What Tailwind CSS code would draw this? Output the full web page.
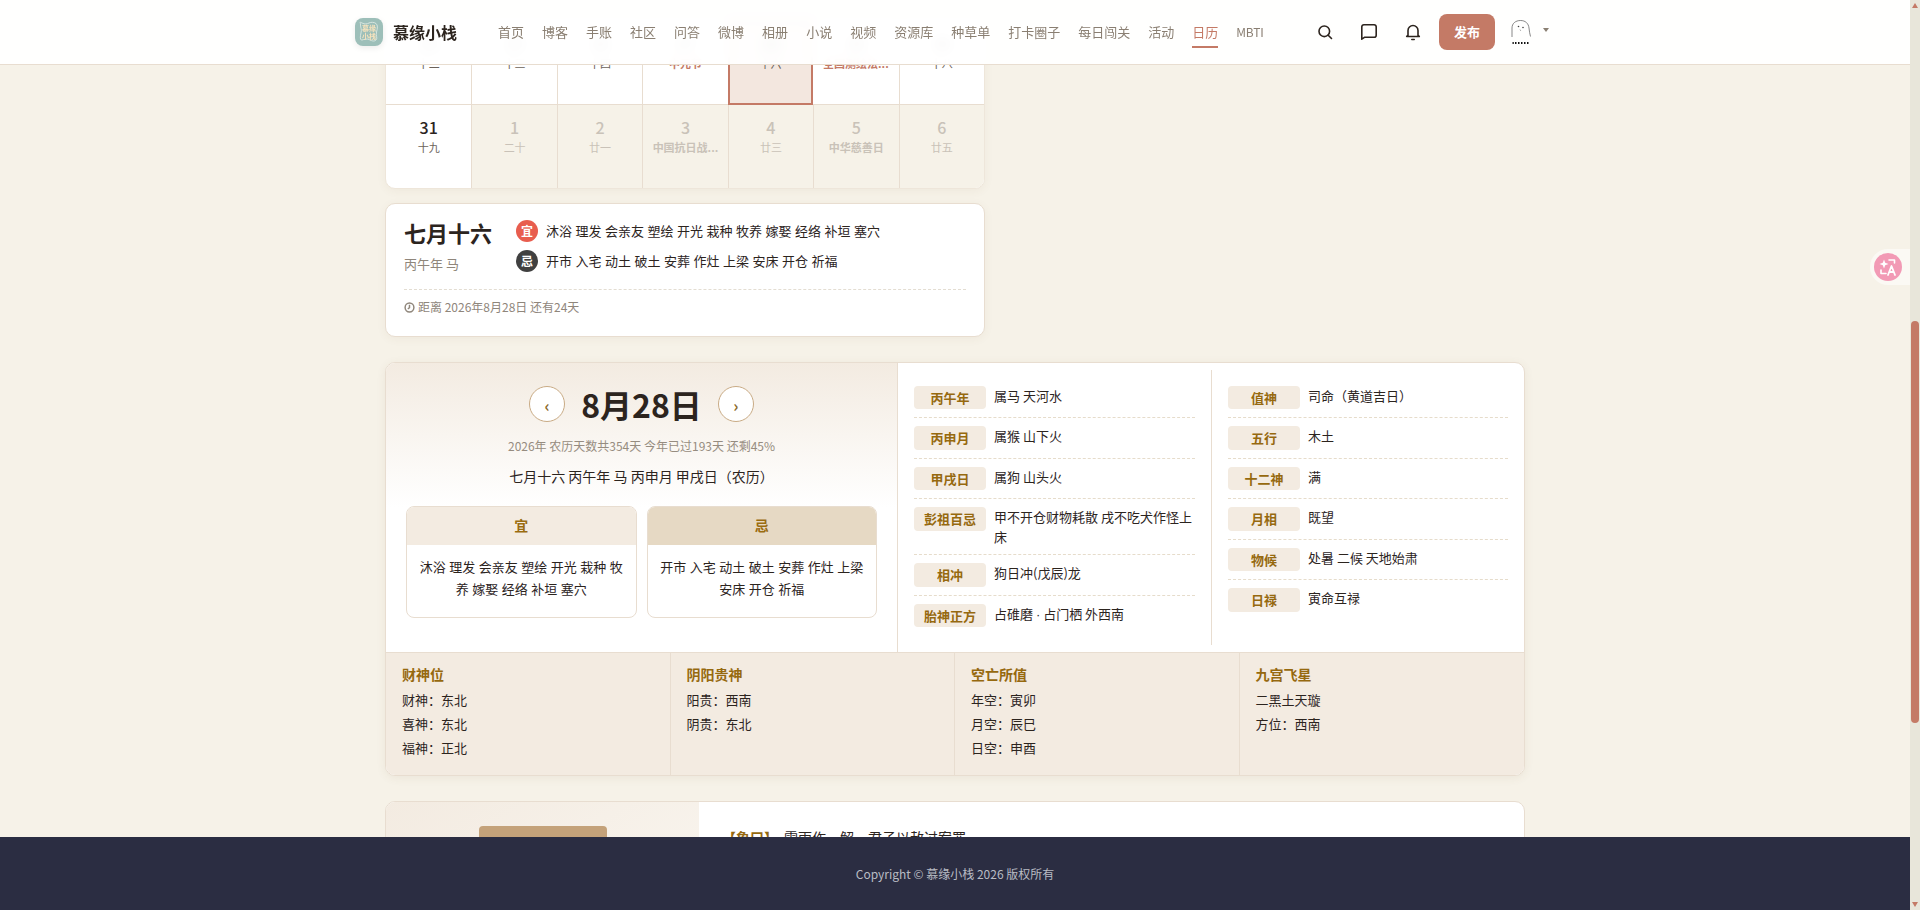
<!DOCTYPE html>
<html lang="zh-CN">
<head>
<meta charset="utf-8">
<title>日历</title>
<script src="https://cdn.jsdelivr.net/npm/@tailwindcss/browser@4"></script>
</head>
<body class="h-[910px] overflow-hidden flex bg-[#f6f2e8] text-[#2c241e] font-['Noto_Sans_CJK_SC','Liberation_Sans',sans-serif]">
<div class="relative flex-1 h-[910px] overflow-hidden">

  <!-- page content -->
  <main class="w-[1140px] mx-auto pt-[20px]">
    <!-- calendar -->
    <section class="w-[600px] h-[169px] bg-white border border-[#eee6da] rounded-[10px] overflow-hidden shadow-[0_2px_10px_rgba(120,90,50,0.06)]">
      <div class="grid grid-cols-7 text-center">
        <div class="h-[84px] border-b border-[#e8ddd0] pt-[10px]"><div class="text-[16px] leading-[24px] font-medium">24</div><div class="text-[11px] leading-[16px] text-[#6b6259]">十二</div></div>
        <div class="h-[84px] border-l border-b border-[#e8ddd0] pt-[10px]"><div class="text-[16px] leading-[24px] font-medium">25</div><div class="text-[11px] leading-[16px] text-[#6b6259]">十三</div></div>
        <div class="h-[84px] border-l border-b border-[#e8ddd0] pt-[10px]"><div class="text-[16px] leading-[24px] font-medium">26</div><div class="text-[11px] leading-[16px] text-[#6b6259]">十四</div></div>
        <div class="h-[84px] border-l border-b border-[#e8ddd0] pt-[10px]"><div class="text-[16px] leading-[24px] font-medium">27</div><div class="text-[11px] leading-[16px] font-semibold text-[#c47a66]">中元节</div></div>
        <div class="h-[84px] border-2 border-[#c47a66] bg-[#f3e7df] pt-[8px]"><div class="text-[16px] leading-[24px] font-medium">28</div><div class="text-[11px] leading-[16px] text-[#6b6259]">十六</div></div>
        <div class="h-[84px] border-b border-[#e8ddd0] pt-[10px]"><div class="text-[16px] leading-[24px] font-medium">29</div><div class="text-[11px] leading-[16px] font-semibold text-[#c47a66]">全国测绘法...</div></div>
        <div class="h-[84px] border-l border-b border-[#e8ddd0] pt-[10px]"><div class="text-[16px] leading-[24px] font-medium">30</div><div class="text-[11px] leading-[16px] text-[#6b6259]">十八</div></div>

        <div class="h-[83px] pt-[10px]"><div class="text-[16px] leading-[24px] font-medium">31</div><div class="text-[11px] leading-[16px] text-[#6b6259]">十九</div></div>
        <div class="h-[83px] border-l border-[#e8ddd0] bg-[#f6f2e8] pt-[10px] text-[#c9c2b8]"><div class="text-[16px] leading-[24px] font-medium">1</div><div class="text-[11px] leading-[16px]">二十</div></div>
        <div class="h-[83px] border-l border-[#e8ddd0] bg-[#f6f2e8] pt-[10px] text-[#c9c2b8]"><div class="text-[16px] leading-[24px] font-medium">2</div><div class="text-[11px] leading-[16px]">廿一</div></div>
        <div class="h-[83px] border-l border-[#e8ddd0] bg-[#f6f2e8] pt-[10px] text-[#c9c2b8]"><div class="text-[16px] leading-[24px] font-medium">3</div><div class="text-[11px] leading-[16px] font-semibold">中国抗日战...</div></div>
        <div class="h-[83px] border-l border-[#e8ddd0] bg-[#f6f2e8] pt-[10px] text-[#c9c2b8]"><div class="text-[16px] leading-[24px] font-medium">4</div><div class="text-[11px] leading-[16px]">廿三</div></div>
        <div class="h-[83px] border-l border-[#e8ddd0] bg-[#f6f2e8] pt-[10px] text-[#c9c2b8]"><div class="text-[16px] leading-[24px] font-medium">5</div><div class="text-[11px] leading-[16px] font-semibold">中华慈善日</div></div>
        <div class="h-[83px] border-l border-[#e8ddd0] bg-[#f6f2e8] pt-[10px] text-[#c9c2b8]"><div class="text-[16px] leading-[24px] font-medium">6</div><div class="text-[11px] leading-[16px]">廿五</div></div>
      </div>
    </section>

    <!-- lunar summary -->
    <section class="w-[600px] h-[134px] mt-[14px] bg-white border border-[#e8ddd0] rounded-[10px] px-[18px] pt-[12px] shadow-[0_2px_10px_rgba(120,90,50,0.06)]">
      <div class="flex h-[74px] border-b border-dashed border-[#e3ddd2]">
        <div class="w-[112px]">
          <div class="text-[22px] leading-[33px] font-bold">七月十六</div>
          <div class="text-[13px] leading-[19.5px] mt-[5px] text-[#8f867b]">丙午年 马</div>
        </div>
        <div class="pt-[4px] text-[13px] [word-spacing:0.6px]">
          <div class="flex items-center gap-2 h-[22px]"><span class="w-[22px] h-[22px] rounded-full bg-[#e85d4e] text-white text-[12px] font-bold flex items-center justify-center">宜</span><span>沐浴 理发 会亲友 塑绘 开光 栽种 牧养 嫁娶 经络 补垣 塞穴</span></div>
          <div class="flex items-center gap-2 h-[22px] mt-[8px]"><span class="w-[22px] h-[22px] rounded-full bg-[#404040] text-white text-[12px] font-bold flex items-center justify-center">忌</span><span>开市 入宅 动土 破土 安葬 作灶 上梁 安床 开仓 祈福</span></div>
        </div>
      </div>
      <div class="flex items-center gap-[3px] pt-[8px] text-[12px] leading-[18px] text-[#8f867b]">
        <svg class="w-[11px] h-[11px]" viewBox="0 0 12 12" fill="none" stroke="#8f867b" stroke-width="1.6"><circle cx="6" cy="6" r="4.8"/><path d="M6 3v3.2L4.2 7.6"/></svg>
        <span>距离 2026年8月28日 还有24天</span>
      </div>
    </section>

    <!-- detail -->
    <section class="mt-[24.5px] bg-white border border-[#e8ddd0] rounded-[10px] overflow-hidden shadow-[0_2px_10px_rgba(120,90,50,0.08)]">
      <div class="flex h-[289px]">
        <div class="w-[512px] border-r border-[#e8ddd0] px-[20px] pt-[23px] bg-linear-to-b from-[#f3ebe1] from-0% to-white to-50%">
          <div class="flex items-center justify-center">
            <span class="w-[36px] h-[36px] rounded-full border border-[#c9ab85] bg-white flex items-center justify-center text-[16px] font-semibold text-[#8b6a2b] pt-[3px]">‹</span>
            <span class="text-[32px] leading-[36px] font-bold mx-[16px]">8月28日</span>
            <span class="w-[36px] h-[36px] rounded-full border border-[#c9ab85] bg-white flex items-center justify-center text-[16px] font-semibold text-[#8b6a2b] pt-[3px]">›</span>
          </div>
          <div class="mt-[15px] text-center text-[12px] leading-[18px] text-[#968c80]">2026年 农历天数共354天 今年已过193天 还剩45%</div>
          <div class="mt-[11px] text-center text-[14px] leading-[21px]">七月十六 丙午年 马 丙申月 甲戌日（农历）</div>
          <div class="mt-[19px] grid grid-cols-2 gap-[10px]">
            <div class="h-[112px] border border-[#e8ddd0] rounded-[8px] overflow-hidden bg-white">
              <div class="h-[38px] bg-[#f3ebe1] text-[#9a6c10] text-[14px] font-semibold flex items-center justify-center">宜</div>
              <div class="px-[12px] pt-[11.5px] text-center text-[13px] leading-[22px] [word-spacing:0.6px]">沐浴 理发 会亲友 塑绘 开光 栽种 牧养 嫁娶 经络 补垣 塞穴</div>
            </div>
            <div class="h-[112px] border border-[#e8ddd0] rounded-[8px] overflow-hidden bg-white">
              <div class="h-[38px] bg-[#e6d9c4] text-[#9a6c10] text-[14px] font-semibold flex items-center justify-center">忌</div>
              <div class="px-[12px] pt-[11.5px] text-center text-[13px] leading-[22px] [word-spacing:0.6px]">开市 入宅 动土 破土 安葬 作灶 上梁 安床 开仓 祈福</div>
            </div>
          </div>
        </div>
        <div class="flex-1 flex py-[7px] text-[13px] leading-[19.5px]">
          <div class="w-[314px] pl-[16px] pr-[16px] py-2 border-r border-[#e8ddd0]">
            <div class="flex gap-2 py-2 border-b border-dashed border-[#e6dccb]"><span class="w-[72px] shrink-0 py-[2px] bg-[#f3ebe1] rounded-[4px] text-center text-[#96690f] font-semibold">丙午年</span><span>属马 天河水</span></div>
            <div class="flex gap-2 py-2 border-b border-dashed border-[#e6dccb]"><span class="w-[72px] shrink-0 py-[2px] bg-[#f3ebe1] rounded-[4px] text-center text-[#96690f] font-semibold">丙申月</span><span>属猴 山下火</span></div>
            <div class="flex gap-2 py-2 border-b border-dashed border-[#e6dccb]"><span class="w-[72px] shrink-0 py-[2px] bg-[#f3ebe1] rounded-[4px] text-center text-[#96690f] font-semibold">甲戌日</span><span>属狗 山头火</span></div>
            <div class="flex items-start gap-2 py-2 border-b border-dashed border-[#e6dccb]"><span class="w-[72px] shrink-0 py-[2px] bg-[#f3ebe1] rounded-[4px] text-center text-[#96690f] font-semibold">彭祖百忌</span><span>甲不开仓财物耗散 戌不吃犬作怪上床</span></div>
            <div class="flex gap-2 py-2 border-b border-dashed border-[#e6dccb]"><span class="w-[72px] shrink-0 py-[2px] bg-[#f3ebe1] rounded-[4px] text-center text-[#96690f] font-semibold">相冲</span><span>狗日冲(戊辰)龙</span></div>
            <div class="flex gap-2 py-2"><span class="w-[72px] shrink-0 py-[2px] bg-[#f3ebe1] rounded-[4px] text-center text-[#96690f] font-semibold">胎神正方</span><span>占碓磨 <span class="font-['Liberation_Sans']">·</span> 占门栖 外西南</span></div>
          </div>
          <div class="flex-1 pl-[16px] pr-[16px] py-2">
            <div class="flex gap-2 py-2 border-b border-dashed border-[#e6dccb]"><span class="w-[72px] shrink-0 py-[2px] bg-[#f3ebe1] rounded-[4px] text-center text-[#96690f] font-semibold">值神</span><span>司命（黄道吉日）</span></div>
            <div class="flex gap-2 py-2 border-b border-dashed border-[#e6dccb]"><span class="w-[72px] shrink-0 py-[2px] bg-[#f3ebe1] rounded-[4px] text-center text-[#96690f] font-semibold">五行</span><span>木土</span></div>
            <div class="flex gap-2 py-2 border-b border-dashed border-[#e6dccb]"><span class="w-[72px] shrink-0 py-[2px] bg-[#f3ebe1] rounded-[4px] text-center text-[#96690f] font-semibold">十二神</span><span>满</span></div>
            <div class="flex gap-2 py-2 border-b border-dashed border-[#e6dccb]"><span class="w-[72px] shrink-0 py-[2px] bg-[#f3ebe1] rounded-[4px] text-center text-[#96690f] font-semibold">月相</span><span>既望</span></div>
            <div class="flex gap-2 py-2 border-b border-dashed border-[#e6dccb]"><span class="w-[72px] shrink-0 py-[2px] bg-[#f3ebe1] rounded-[4px] text-center text-[#96690f] font-semibold">物候</span><span>处暑 二候 天地始肃</span></div>
            <div class="flex gap-2 py-2"><span class="w-[72px] shrink-0 py-[2px] bg-[#f3ebe1] rounded-[4px] text-center text-[#96690f] font-semibold">日禄</span><span>寅命互禄</span></div>
          </div>
        </div>
      </div>
      <div class="grid grid-cols-4 border-t border-[#e8ddd0] bg-[#f3ebe1] text-[13px] leading-[24px]">
        <div class="px-[16px] pt-[11.5px] pb-[15px] border-r border-[#e8ddd0]"><div class="text-[14px] leading-[21px] font-semibold text-[#96690f] mb-[3px]">财神位</div><div>财神：东北</div><div>喜神：东北</div><div>福神：正北</div></div>
        <div class="px-[16px] pt-[11.5px] pb-[15px] border-r border-[#e8ddd0]"><div class="text-[14px] leading-[21px] font-semibold text-[#96690f] mb-[3px]">阴阳贵神</div><div>阳贵：西南</div><div>阴贵：东北</div></div>
        <div class="px-[16px] pt-[11.5px] pb-[15px] border-r border-[#e8ddd0]"><div class="text-[14px] leading-[21px] font-semibold text-[#96690f] mb-[3px]">空亡所值</div><div>年空：寅卯</div><div>月空：辰巳</div><div>日空：申酉</div></div>
        <div class="px-[16px] pt-[11.5px] pb-[15px]"><div class="text-[14px] leading-[21px] font-semibold text-[#96690f] mb-[3px]">九宫飞星</div><div>二黑土天璇</div><div>方位：西南</div></div>
      </div>
    </section>

    <!-- hexagram -->
    <section class="mt-[25px] h-[200px] flex bg-white border border-[#e8ddd0] rounded-[10px] overflow-hidden">
      <div class="w-[313px] pt-[24px] flex justify-center bg-linear-to-br from-[#f3ebe1] to-[#fbf8f3]">
        <div class="w-[128px] h-[44px] rounded-[4px] bg-[#c4a27a]"></div>
      </div>
      <div class="pl-[23px] pt-[25px] text-[14px] leading-[21px]"><span class="text-[#96690f] font-semibold">【象曰】</span><span class="ml-[6px]">雷雨作，解。君子以赦过宥罪</span></div>
    </section>
  </main>

  <!-- header -->
  <header class="absolute top-0 left-0 right-0 h-[65px] bg-white/95 backdrop-blur-[6px] border-b border-[#e8ddd0]">
    <div class="w-[1200px] mx-auto h-[64px] flex items-center">
      <div class="relative w-[28px] h-[28px] rounded-[8px] bg-[#9dbfb9] shadow-[0_2px_6px_rgba(0,0,0,0.08)] overflow-hidden flex items-center justify-center">
        <svg class="absolute inset-0" viewBox="0 0 28 28" fill="none" stroke="#e4efe9" stroke-width="0.8"><path d="M7 5c3 1.500 5 1 7 0s5-1 7 .5 1.500 5 .5 8.500 1.500 6-.5 8-5 .5-7-.5-5 0-7 .5-2-3-1-7-.500-5-.5-8S4 3.500 7 5z"/></svg>
        <div class="relative grid grid-cols-2 text-[7px] leading-[8px] font-bold text-[#f7e3bd]"><span>慕</span><span>缘</span><span>小</span><span>栈</span></div>
      </div>
      <div class="ml-[10px] text-[16px] font-bold text-[#2c241e]">慕缘小栈</div>
      <nav class="ml-[32px] self-start mt-[18px] flex text-[13px] leading-[28px] text-[#8a7f72]">
        <a class="h-[30px] mx-[9px] border-b-2 border-transparent">首页</a>
        <a class="h-[30px] mx-[9px] border-b-2 border-transparent">博客</a>
        <a class="h-[30px] mx-[9px] border-b-2 border-transparent">手账</a>
        <a class="h-[30px] mx-[9px] border-b-2 border-transparent">社区</a>
        <a class="h-[30px] mx-[9px] border-b-2 border-transparent">问答</a>
        <a class="h-[30px] mx-[9px] border-b-2 border-transparent">微博</a>
        <a class="h-[30px] mx-[9px] border-b-2 border-transparent">相册</a>
        <a class="h-[30px] mx-[9px] border-b-2 border-transparent">小说</a>
        <a class="h-[30px] mx-[9px] border-b-2 border-transparent">视频</a>
        <a class="h-[30px] mx-[9px] border-b-2 border-transparent">资源库</a>
        <a class="h-[30px] mx-[9px] border-b-2 border-transparent">种草单</a>
        <a class="h-[30px] mx-[9px] border-b-2 border-transparent">打卡圈子</a>
        <a class="h-[30px] mx-[9px] border-b-2 border-transparent">每日闯关</a>
        <a class="h-[30px] mx-[9px] border-b-2 border-transparent">活动</a>
        <a class="h-[30px] mx-[9px] border-b-2 border-[#c47a66] text-[#c47a66]">日历</a>
        <a class="h-[30px] mx-[9px] border-b-2 border-transparent text-[12px] tracking-[-0.2px]">MBTI</a>
      </nav>
      <div class="ml-auto flex items-center pr-[6px]">
        <div class="flex gap-2 text-[#2c241e]">
          <span class="w-[36px] h-[36px] flex items-center justify-center"><svg class="w-[16px] h-[16px]" viewBox="0 0 16 16" fill="none" stroke="currentColor" stroke-width="1.6" stroke-linecap="round"><circle cx="7.300" cy="7.300" r="5.300"/><path d="M11.200 11.200L14.500 14.500"/></svg></span>
          <span class="w-[36px] h-[36px] flex items-center justify-center"><svg class="w-[18px] h-[18px]" viewBox="0 0 18 18" fill="none" stroke="currentColor" stroke-width="1.600" stroke-linejoin="round"><path d="M1.800 16.200V3.800a2 2 0 0 1 2-2h10.400a2 2 0 0 1 2 2v8.400a2 2 0 0 1-2 2H4.800z"/></svg></span>
          <span class="w-[36px] h-[36px] flex items-center justify-center"><svg class="w-[16px] h-[18px]" viewBox="0 0 16 18" fill="none" stroke="currentColor" stroke-width="1.600" stroke-linecap="round" stroke-linejoin="round"><path d="M3 12.500V7.500a5 5 0 0 1 10 0v5l1.300 1H1.700z"/><path d="M6.800 16.500h2.400"/></svg></span>
        </div>
        <button class="ml-[8px] w-[56px] h-[36px] rounded-[8px] bg-[#c47a66] text-white text-[13px] font-bold">发布</button>
        <div class="ml-[14px] w-[26px] h-[28px]">
          <svg class="w-[26px] h-[28px]" viewBox="0 0 26 28" fill="none"><path d="M3 19V10c0-4.500 3.500-7.500 8.500-7.500s8 3 8.500 7.500c.3 3 .8 6 1.500 8.500" stroke="#555" stroke-width="0.7"/><circle cx="9.500" cy="8.500" r="0.800" fill="#444"/><circle cx="14" cy="9.500" r="0.800" fill="#444"/><path d="M11 11.500l.8 1.500" stroke="#666" stroke-width="0.500"/><path d="M3.500 25h1.300M6 25h1.500M9 25h1.500M12 25h1.500M15 25h1.500M18 25h1.500" stroke="#111" stroke-width="1.800"/></svg>
        </div>
        <span class="ml-[8px] w-0 h-0 border-x-[3px] border-x-transparent border-t-[4px] border-t-[#8a7f72] -mt-[4px]"></span>
      </div>
    </div>
  </header>

  <!-- floating translate -->
  <div class="absolute top-[249px] right-0 w-[40px] h-[36px] bg-[#fbf9f4] rounded-l-[18px] flex items-center pl-[4px]">
    <svg class="w-[28px] h-[28px]" viewBox="0 0 28 28"><circle cx="14" cy="14" r="14" fill="#f29ab5"/><path d="M10 6.500l1.200 3.300 3.300 1.200-3.300 1.200L10 15.500l-1.200-3.300L5.500 11l3.300-1.200z" fill="#fff"/><path d="M15 7h5.500v3" fill="none" stroke="#fff" stroke-width="1.600" stroke-linecap="round" stroke-linejoin="round"/><path d="M7 17v3.500h5" fill="none" stroke="#fff" stroke-width="1.600" stroke-linecap="round" stroke-linejoin="round"/><path d="M14 22l3.500-9 3.500 9M15.300 19h4.400" fill="none" stroke="#fff" stroke-width="1.800" stroke-linecap="round" stroke-linejoin="round"/></svg>
  </div>

  <!-- footer -->
  <footer class="absolute left-0 right-0 bottom-0 h-[73px] bg-[#2b2d42] flex items-center justify-center text-[12px] text-[#b9bcc4]">Copyright © 慕缘小栈 2026 版权所有</footer>
</div>

<!-- scrollbar -->
<aside class="w-[10px] h-[910px] bg-[#e8e6da] flex flex-col items-center">
  <span class="mt-[3px] w-0 h-0 border-x-[3.500px] border-x-transparent border-b-[5px] border-b-[#c47a66]"></span>
  <span class="mt-[313px] w-[8px] h-[402px] rounded-[4px] bg-[#c47a66]"></span>
  <span class="mt-auto mb-[3px] w-0 h-0 border-x-[3.500px] border-x-transparent border-t-[5px] border-t-[#c47a66]"></span>
</aside>
</body>
</html>
